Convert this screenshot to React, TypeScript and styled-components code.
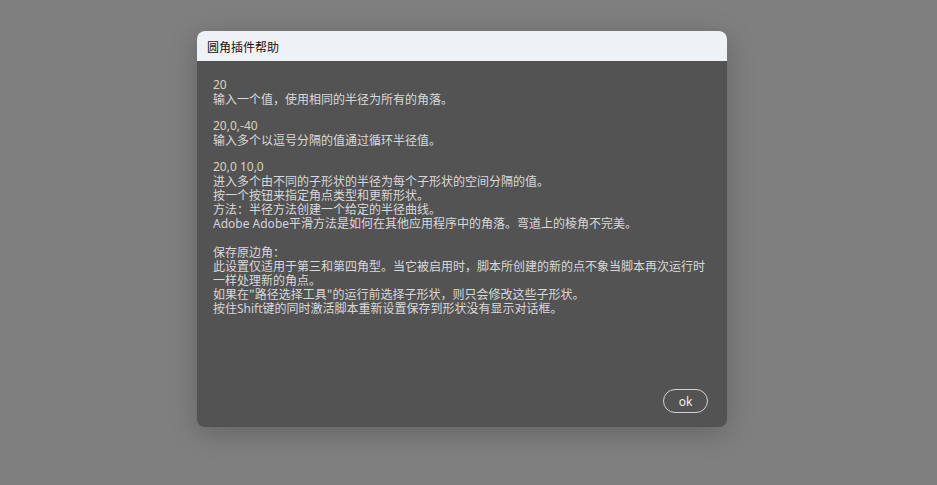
import React from "react";
import styled, { createGlobalStyle } from "styled-components";

const Global = createGlobalStyle`
  html, body { margin: 0; padding: 0; background: #7f7f7f; }
  body { width: 937px; height: 485px; overflow: hidden; }
`;

const Page = styled.div`
  width: 937px;
  height: 485px;
  box-sizing: border-box;
  padding: 31px 0 0 197px;
  display: flex;
  align-items: flex-start;
`;

const Dialog = styled.div`
  width: 530px;
  height: 396px;
  border-radius: 8px;
  overflow: hidden;
  background: #535353;
  box-shadow: 0 6px 28px rgba(0, 0, 0, 0.22);
  display: flex;
  flex-direction: column;
  font-family: "Noto Sans CJK SC", "Noto Sans", sans-serif;
`;

const TitleBar = styled.div`
  height: 30px;
  background: #eff2f5;
  display: flex;
  align-items: center;
  padding: 0 10px;
  font-size: 12px;
  color: #111;
`;

const Body = styled.div`
  flex: 1;
  display: flex;
  flex-direction: column;
  padding: 16px 16px 14px 16px;
  color: #d9d9d9;
  font-size: 12px;
`;

const Text = styled.div`
  flex: 1;
  display: flex;
  flex-direction: column;
`;

const Line = styled.div<{ $num?: boolean }>`
  height: ${(p) => (p.$num ? 15 : 14)}px;
  line-height: ${(p) => (p.$num ? 15 : 14)}px;
  white-space: nowrap;
  font-family: ${(p) =>
    p.$num ? '"Noto Sans", "Noto Sans CJK SC", sans-serif' : '"Noto Sans CJK SC", sans-serif'};
  color: ${(p) => (p.$num ? "#d8d3bf" : "#d9d9d9")};
`;

const Latin = styled.span`
  font-family: "Noto Sans", sans-serif;
  font-size: 12px;
  color: #d2d4dc;
`;

const Gap = styled.div<{ $h: number }>`
  height: ${(p) => p.$h}px;
`;

const Footer = styled.div`
  display: flex;
  justify-content: flex-end;
  padding-right: 3px;
`;

const OkButton = styled.button`
  width: 45px;
  height: 24px;
  border: 1px solid #d2d2d2;
  border-radius: 12px;
  background: transparent;
  color: #f0f0f0;
  font-family: "Noto Sans", sans-serif;
  font-size: 12px;
  padding: 0;
  cursor: pointer;
`;

export default function App() {
  return (
    <>
      <Global />
      <Page>
        <Dialog>
          <TitleBar>圆角插件帮助</TitleBar>
          <Body>
            <Text>
              <Line $num>20</Line>
              <Line>输入一个值，使用相同的半径为所有的角落。</Line>
              <Gap $h={12} />
              <Line $num>20,0,-40</Line>
              <Line>输入多个以逗号分隔的值通过循环半径值。</Line>
              <Gap $h={12} />
              <Line $num>20,0 10,0</Line>
              <Line>进入多个由不同的子形状的半径为每个子形状的空间分隔的值。</Line>
              <Line>按一个按钮来指定角点类型和更新形状。</Line>
              <Line>方法：半径方法创建一个给定的半径曲线。</Line>
              <Line>
                <Latin>Adobe Adobe</Latin>平滑方法是如何在其他应用程序中的角落。弯道上的棱角不完美。
              </Line>
              <Gap $h={15} />
              <Line>保存原边角：</Line>
              <Line>此设置仅适用于第三和第四角型。当它被启用时，脚本所创建的新的点不象当脚本再次运行时</Line>
              <Line>一样处理新的角点。</Line>
              <Line>如果在"路径选择工具"的运行前选择子形状，则只会修改这些子形状。</Line>
              <Line>
                按住<Latin>Shift</Latin>键的同时激活脚本重新设置保存到形状没有显示对话框。
              </Line>
            </Text>
            <Footer>
              <OkButton>ok</OkButton>
            </Footer>
          </Body>
        </Dialog>
      </Page>
    </>
  );
}
